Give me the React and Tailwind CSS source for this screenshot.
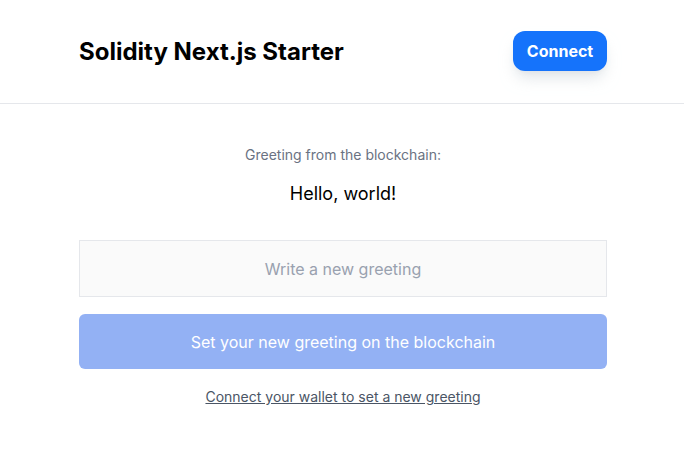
export default function App() {
  return (
    <div className="min-h-screen bg-white text-black" style={{ fontFamily: 'Inter, "Noto Sans", sans-serif' }}>
      {/* Header */}
      <header className="border-b border-gray-200">
        <div className="w-[530px] mx-auto pl-[2px] h-[103px] flex items-center justify-between">
          <h1 className="text-[24px] font-bold">Solidity Next.js Starter</h1>
          <button className="w-[94px] h-[40px] -mt-[2px] rounded-xl bg-[#1573fb] text-white font-bold text-base shadow-lg shadow-gray-300/60">
            Connect
          </button>
        </div>
      </header>

      {/* Greeting */}
      <main className="w-[530px] mx-auto pl-[2px] pt-[41px] flex flex-col items-center">
        <p className="text-sm text-gray-500 leading-5">Greeting from the blockchain:</p>
        <p className="mt-[17px] text-lg leading-6">Hello, world!</p>

        <input
          className="mt-[34px] w-full h-[57px] bg-[#fafafa] border border-gray-200 text-center text-base placeholder-gray-400 outline-none"
          placeholder="Write a new greeting"
        />
        <button
          disabled
          className="mt-[17px] w-full h-[55px] rounded-md bg-[#93b1f4] text-white text-base"
        >
          Set your new greeting on the blockchain
        </button>
        <a href="#" className="mt-[18px] text-sm text-gray-600 underline">
          Connect your wallet to set a new greeting
        </a>
      </main>
    </div>
  );
}
